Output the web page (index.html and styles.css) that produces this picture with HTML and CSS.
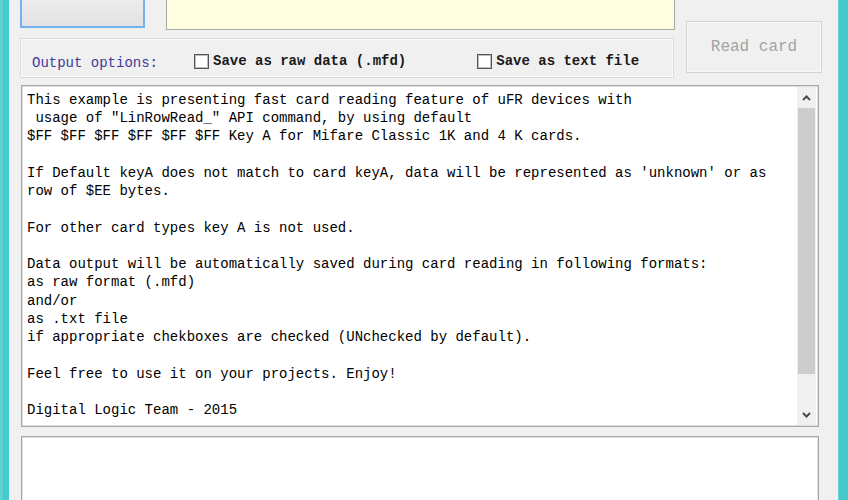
FILE: index.html
```html
<!DOCTYPE html>
<html>
<head>
    <title>uFR Fast Card Reading</title>
    <link rel="stylesheet" href="styles.css">
</head>
<body>
    <div class="app">
        <div class="edge edge-left"></div>

        <div class="window">
            <div class="head">
                <div class="head-main">
                    <div class="top-row">
                        <button class="focus-btn"></button>
                        <div class="note"></div>
                    </div>
                    <div class="options">
                        <span class="options-title">Output options:</span>
                        <label class="check check-raw"><span class="box"></span>Save as raw data (.mfd)</label>
                        <label class="check check-txt"><span class="box"></span>Save as text file</label>
                    </div>
                </div>
                <button class="read-card" disabled>Read card</button>
            </div>

            <div class="output">
<div class="output-text">This example is presenting fast card reading feature of uFR devices with
 usage of "LinRowRead_" API command, by using default
$FF $FF $FF $FF $FF $FF Key A for Mifare Classic 1K and 4 K cards.

If Default keyA does not match to card keyA, data will be represented as 'unknown' or as
row of $EE bytes.

For other card types key A is not used.

Data output will be automatically saved during card reading in following formats:
as raw format (.mfd)
and/or
as .txt file
if appropriate chekboxes are checked (UNchecked by default).

Feel free to use it on your projects. Enjoy!

Digital Logic Team - 2015</div>
                <div class="scrollbar">
                    <div class="arrow arrow-up">
                        <svg width="9" height="6" viewBox="0 0 9 6"><polyline points="1,5 4.5,1.5 8,5" fill="none" stroke="#4a4a4a" stroke-width="2"/></svg>
                    </div>
                    <div class="thumb"></div>
                    <div class="track"></div>
                    <div class="arrow arrow-down">
                        <svg width="9" height="6" viewBox="0 0 9 6"><polyline points="1,1 4.5,4.5 8,1" fill="none" stroke="#4a4a4a" stroke-width="2"/></svg>
                    </div>
                </div>
            </div>

            <div class="log"></div>
        </div>

        <div class="edge edge-right"></div>
    </div>
</body>
</html>
```

FILE: styles.css
```css
body { margin: 0; background-color: #f0f0f0; font-family: "Liberation Mono", "Courier New", monospace; font-size: 14px; color: #000; }
.app { display: flex; width: 848px; height: 500px; overflow: hidden; }
.edge { background-color: #43caca; }
.edge-left { width: 9px; border-left: 3px solid #5cd3d3; box-sizing: border-box; }
.edge-right { width: 10px; border-left: 1px solid #66d4d4; box-sizing: border-box; }
.window { flex: 1; padding-left: 11px; background-color: #f0f0f0; }

.head { display: flex; align-items: flex-start; }
.head-main { width: 655px; }
.top-row { display: flex; align-items: flex-start; height: 30px; }
.focus-btn {
    width: 125px; height: 28px; border: 2px solid #70b2f2; border-top: none; padding: 0;
    background: linear-gradient(#ececec, #e2e2e2); box-sizing: border-box;
}
.note { width: 509px; height: 30px; margin-left: 21px; background-color: #ffffe0; border: 1px solid #a9a9a9; border-top: none; box-sizing: border-box; }

.options {
    display: flex; align-items: center; width: 654px; height: 40px; margin-top: 8px; padding: 6px 0 0 11px;
    border: 1px solid #dcdcdc; box-shadow: inset 0 0 0 1px #f9f9f9; box-sizing: border-box; white-space: nowrap;
}
.options-title { flex-shrink: 0; width: 127px; margin-top: 3px; color: #3b3b98; }
.check { display: flex; align-items: center; flex-shrink: 0; font-weight: bold; color: #1a1a1a; }
.check-raw { margin-left: 35px; }
.check-txt { margin-left: 71px; }
.box { width: 15px; height: 15px; margin-right: 4px; background-color: #fff; border: 1px solid #555; box-shadow: inset 0 0 0 1px #bdbdbd; box-sizing: border-box; }

.read-card {
    width: 136px; height: 52px; margin: 21px 0 0 11px; padding: 0;
    background-color: #f0f0f0; border: 1px solid #d2d2d2; box-shadow: inset 0 0 0 1px #f8f8f8;
    font-family: "Liberation Mono", "Courier New", monospace; font-size: 16px; color: #a3a3a3; box-sizing: border-box;
}

.output {
    display: flex; width: 798px; height: 342px; margin: 7px 0 0 1px; background-color: #fff;
    border: 1px solid #a5a5a5; box-shadow: inset 0 0 0 1px #dedede; box-sizing: border-box;
}
.output-text { flex: 1; padding: 5px 5px 0; white-space: pre; line-height: 18.24px; overflow: hidden; }
.scrollbar { display: flex; flex-direction: column; width: 19px; margin: 1px 2px 1px 0; background-color: #f0f0f0; }
.arrow { display: flex; align-items: center; justify-content: center; height: 21px; }
.thumb { height: 266px; margin: 0 1px 0 1px; background-color: #cdcdcd; }
.track { flex: 1; }

.log { width: 798px; height: 80px; margin: 9px 0 0 1px; background-color: #fff; border: 1px solid #a5a5a5; box-shadow: inset 0 0 0 1px #dedede; box-sizing: border-box; }
```
